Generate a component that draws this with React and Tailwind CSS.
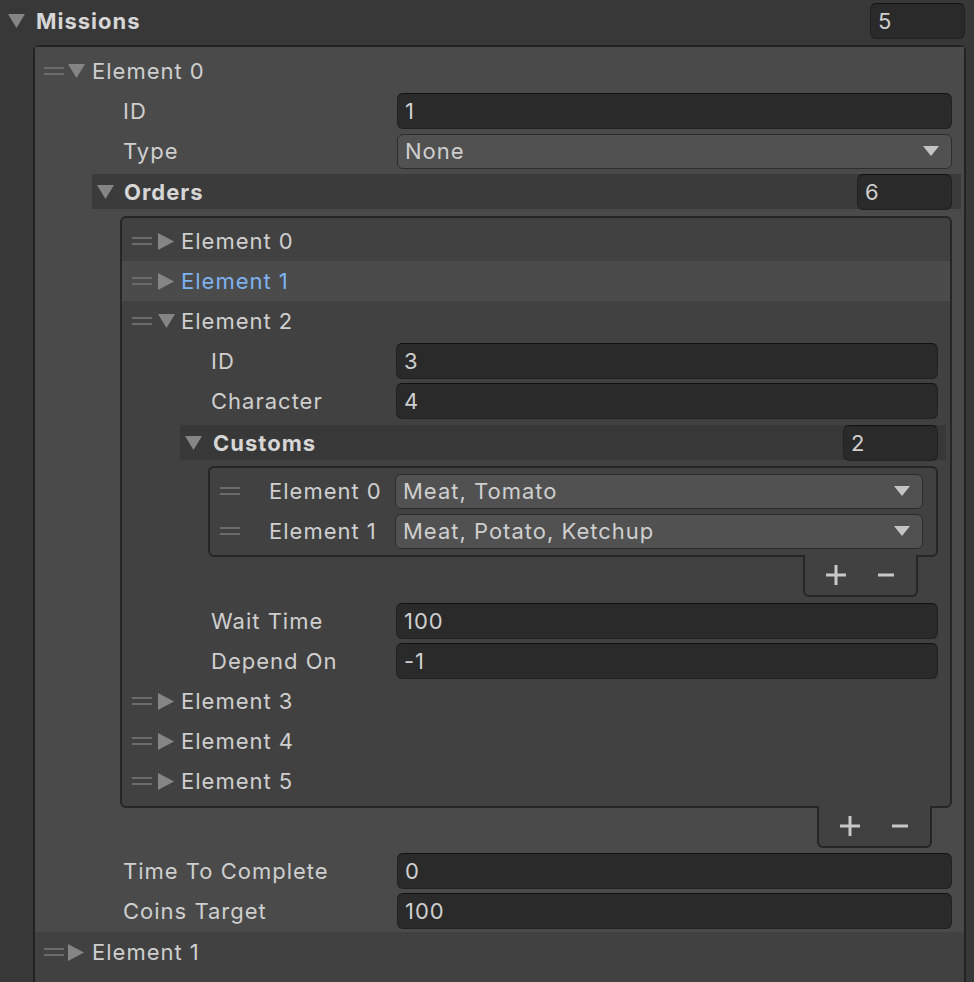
import React from 'react';

function DownArrow() {
  return (
    <svg width="17" height="14" viewBox="0 0 17 14" className="shrink-0">
      <polygon points="0,0 17,0 8.5,14" fill="#858585" />
    </svg>
  );
}

function RightArrow() {
  return (
    <svg width="16" height="17" viewBox="0 0 16 17" className="shrink-0">
      <polygon points="0,0 16,8.5 0,17" fill="#858585" />
    </svg>
  );
}

function Handle() {
  return (
    <div className="flex flex-col gap-[4px] w-[20px] shrink-0">
      <div className="h-[2px] bg-[#6b6b6b]" />
      <div className="h-[2px] bg-[#6b6b6b]" />
    </div>
  );
}

function Input({ value, className = '' }) {
  return (
    <div className={`h-[36px] flex items-center pl-[7px] bg-[#2a2a2a] border border-[#212121] border-t-[#111111] rounded-[6px] ${className}`}>
      {value}
    </div>
  );
}

function Dropdown({ value, className = '' }) {
  return (
    <div className={`h-[35px] flex items-center justify-between pl-[7px] pr-[12px] bg-[#515151] border border-[#2d2d2d] rounded-[6px] ${className}`}>
      <span>{value}</span>
      <svg width="16" height="10" viewBox="0 0 16 10">
        <polygon points="0,0 16,0 8,10" fill="#c4c4c4" />
      </svg>
    </div>
  );
}

function Footer() {
  return (
    <div className="flex justify-end pr-[20px]">
      <div className="relative -mt-[2px] w-[115px] h-[42px] bg-[#414141] border-2 border-t-0 border-[#262626] rounded-b-[6px] flex items-center pl-[16px] gap-[20px]">
        <div className="w-[30px] h-[20px] flex items-center justify-center">
          <svg width="20" height="20" viewBox="0 0 20 20">
            <rect x="0" y="8.5" width="20" height="3" fill="#c8c8c8" />
            <rect x="8.5" y="0" width="3" height="20" fill="#c8c8c8" />
          </svg>
        </div>
        <div className="w-[30px] h-[20px] flex items-center justify-center">
          <svg width="16" height="4" viewBox="0 0 16 4">
            <rect x="0" y="0.5" width="16" height="3" fill="#c8c8c8" />
          </svg>
        </div>
      </div>
    </div>
  );
}

function ElementRow({ label, open, active, className = '' }) {
  return (
    <div className={`h-[40px] flex items-center pl-[10px] ${active ? 'bg-[#4b4b4b] text-[#7fb2f0]' : ''} ${className}`}>
      <Handle />
      <div className="ml-[6px] w-[17px] flex items-center">{open ? <DownArrow /> : <RightArrow />}</div>
      <span className="ml-[6px]">{label}</span>
    </div>
  );
}

const orders = ['Element 3', 'Element 4', 'Element 5'];

export default function App() {
  return (
    <div className="w-[974px] h-[982px] overflow-hidden bg-[#383838] text-[#cfcfcf] text-[22px] tracking-[1px] font-['Inter','Noto_Sans',sans-serif] leading-none">
      {/* Missions header */}
      <div className="h-[41px] flex items-center pl-[8px] pr-[9px]">
        <DownArrow />
        <span className="ml-[11px] font-bold text-[#d6d6d6]">Missions</span>
        <Input value="5" className="ml-auto w-[95px] h-[35px]" />
      </div>

      {/* list box */}
      <div className="mt-[4px] ml-[33px] w-[933px] h-[960px] border-2 border-b-0 border-[#232323] rounded-t-[6px] bg-[#414141]">
        <div className="bg-[#4a4a4a] pt-[4px] pb-[1px]">
          <div className="h-[40px] flex items-center pl-[9px]">
            <Handle />
            <div className="ml-[4px]"><DownArrow /></div>
            <span className="ml-[7px]">Element 0</span>
          </div>

          <div className="h-[40px] flex items-center pl-[88px] pr-[12px]">
            <span className="w-[274px] shrink-0">ID</span>
            <Input value="1" className="flex-1" />
          </div>
          <div className="h-[40px] flex items-center pl-[88px] pr-[12px]">
            <span className="w-[274px] shrink-0">Type</span>
            <Dropdown value="None" className="flex-1" />
          </div>

          {/* Orders header */}
          <div className="mt-[3px] ml-[57px] mr-[3px] h-[35px] bg-[#3b3b3b] flex items-center pl-[5px] pr-[9px]">
            <DownArrow />
            <span className="ml-[10px] font-bold text-[#d6d6d6]">Orders</span>
            <Input value="6" className="ml-auto w-[95px] h-[35px]" />
          </div>

          {/* Orders box */}
          <div className="mt-[7px] ml-[85px] mr-[12px]">
            <div className="border-2 border-[#262626] rounded-[6px] bg-[#414141] pt-[3px] pb-[5px]">
              <ElementRow label="Element 0" />
              <ElementRow label="Element 1" active />
              <ElementRow label="Element 2" open />

              <div className="h-[40px] flex items-center pl-[89px] pr-[12px]">
                <span className="w-[185px] shrink-0">ID</span>
                <Input value="3" className="flex-1" />
              </div>
              <div className="h-[40px] flex items-center pl-[89px] pr-[12px]">
                <span className="w-[185px] shrink-0">Character</span>
                <Input value="4" className="flex-1" />
              </div>

              {/* Customs header */}
              <div className="mt-[4px] ml-[58px] mr-[4px] h-[35px] bg-[#383838] flex items-center pl-[5px] pr-[8px]">
                <DownArrow />
                <span className="ml-[11px] font-bold text-[#d6d6d6]">Customs</span>
                <Input value="2" className="ml-auto w-[95px] h-[35px]" />
              </div>

              {/* Customs box */}
              <div className="mt-[6px] ml-[86px] mr-[12px]">
                <div className="border-2 border-[#262626] rounded-[6px] bg-[#414141] pt-[3px] pb-[4px]">
                  <div className="h-[40px] flex items-center pl-[10px] pr-[13px]">
                    <Handle />
                    <span className="ml-[29px] w-[126px] shrink-0">Element 0</span>
                    <Dropdown value="Meat, Tomato" className="flex-1" />
                  </div>
                  <div className="h-[40px] flex items-center pl-[10px] pr-[13px]">
                    <Handle />
                    <span className="ml-[29px] w-[126px] shrink-0">Element 1</span>
                    <Dropdown value="Meat, Potato, Ketchup" className="flex-1" />
                  </div>
                </div>
                <Footer />
              </div>

              <div className="mt-[4px] h-[40px] flex items-center pl-[89px] pr-[12px]">
                <span className="w-[185px] shrink-0">Wait Time</span>
                <Input value="100" className="flex-1" />
              </div>
              <div className="h-[40px] flex items-center pl-[89px] pr-[12px]">
                <span className="w-[185px] shrink-0">Depend On</span>
                <Input value="-1" className="flex-1" />
              </div>

              {orders.map((o) => (
                <ElementRow key={o} label={o} />
              ))}
            </div>
            <Footer />
          </div>

          <div className="mt-[3px] h-[40px] flex items-center pl-[88px] pr-[12px]">
            <span className="w-[274px] shrink-0">Time To Complete</span>
            <Input value="0" className="flex-1" />
          </div>
          <div className="h-[40px] flex items-center pl-[88px] pr-[12px]">
            <span className="w-[274px] shrink-0">Coins Target</span>
            <Input value="100" className="flex-1" />
          </div>
        </div>

        <div className="h-[40px] flex items-center pl-[9px]">
          <Handle />
          <div className="ml-[4px]"><RightArrow /></div>
          <span className="ml-[8px]">Element 1</span>
        </div>
      </div>
    </div>
  );
}
